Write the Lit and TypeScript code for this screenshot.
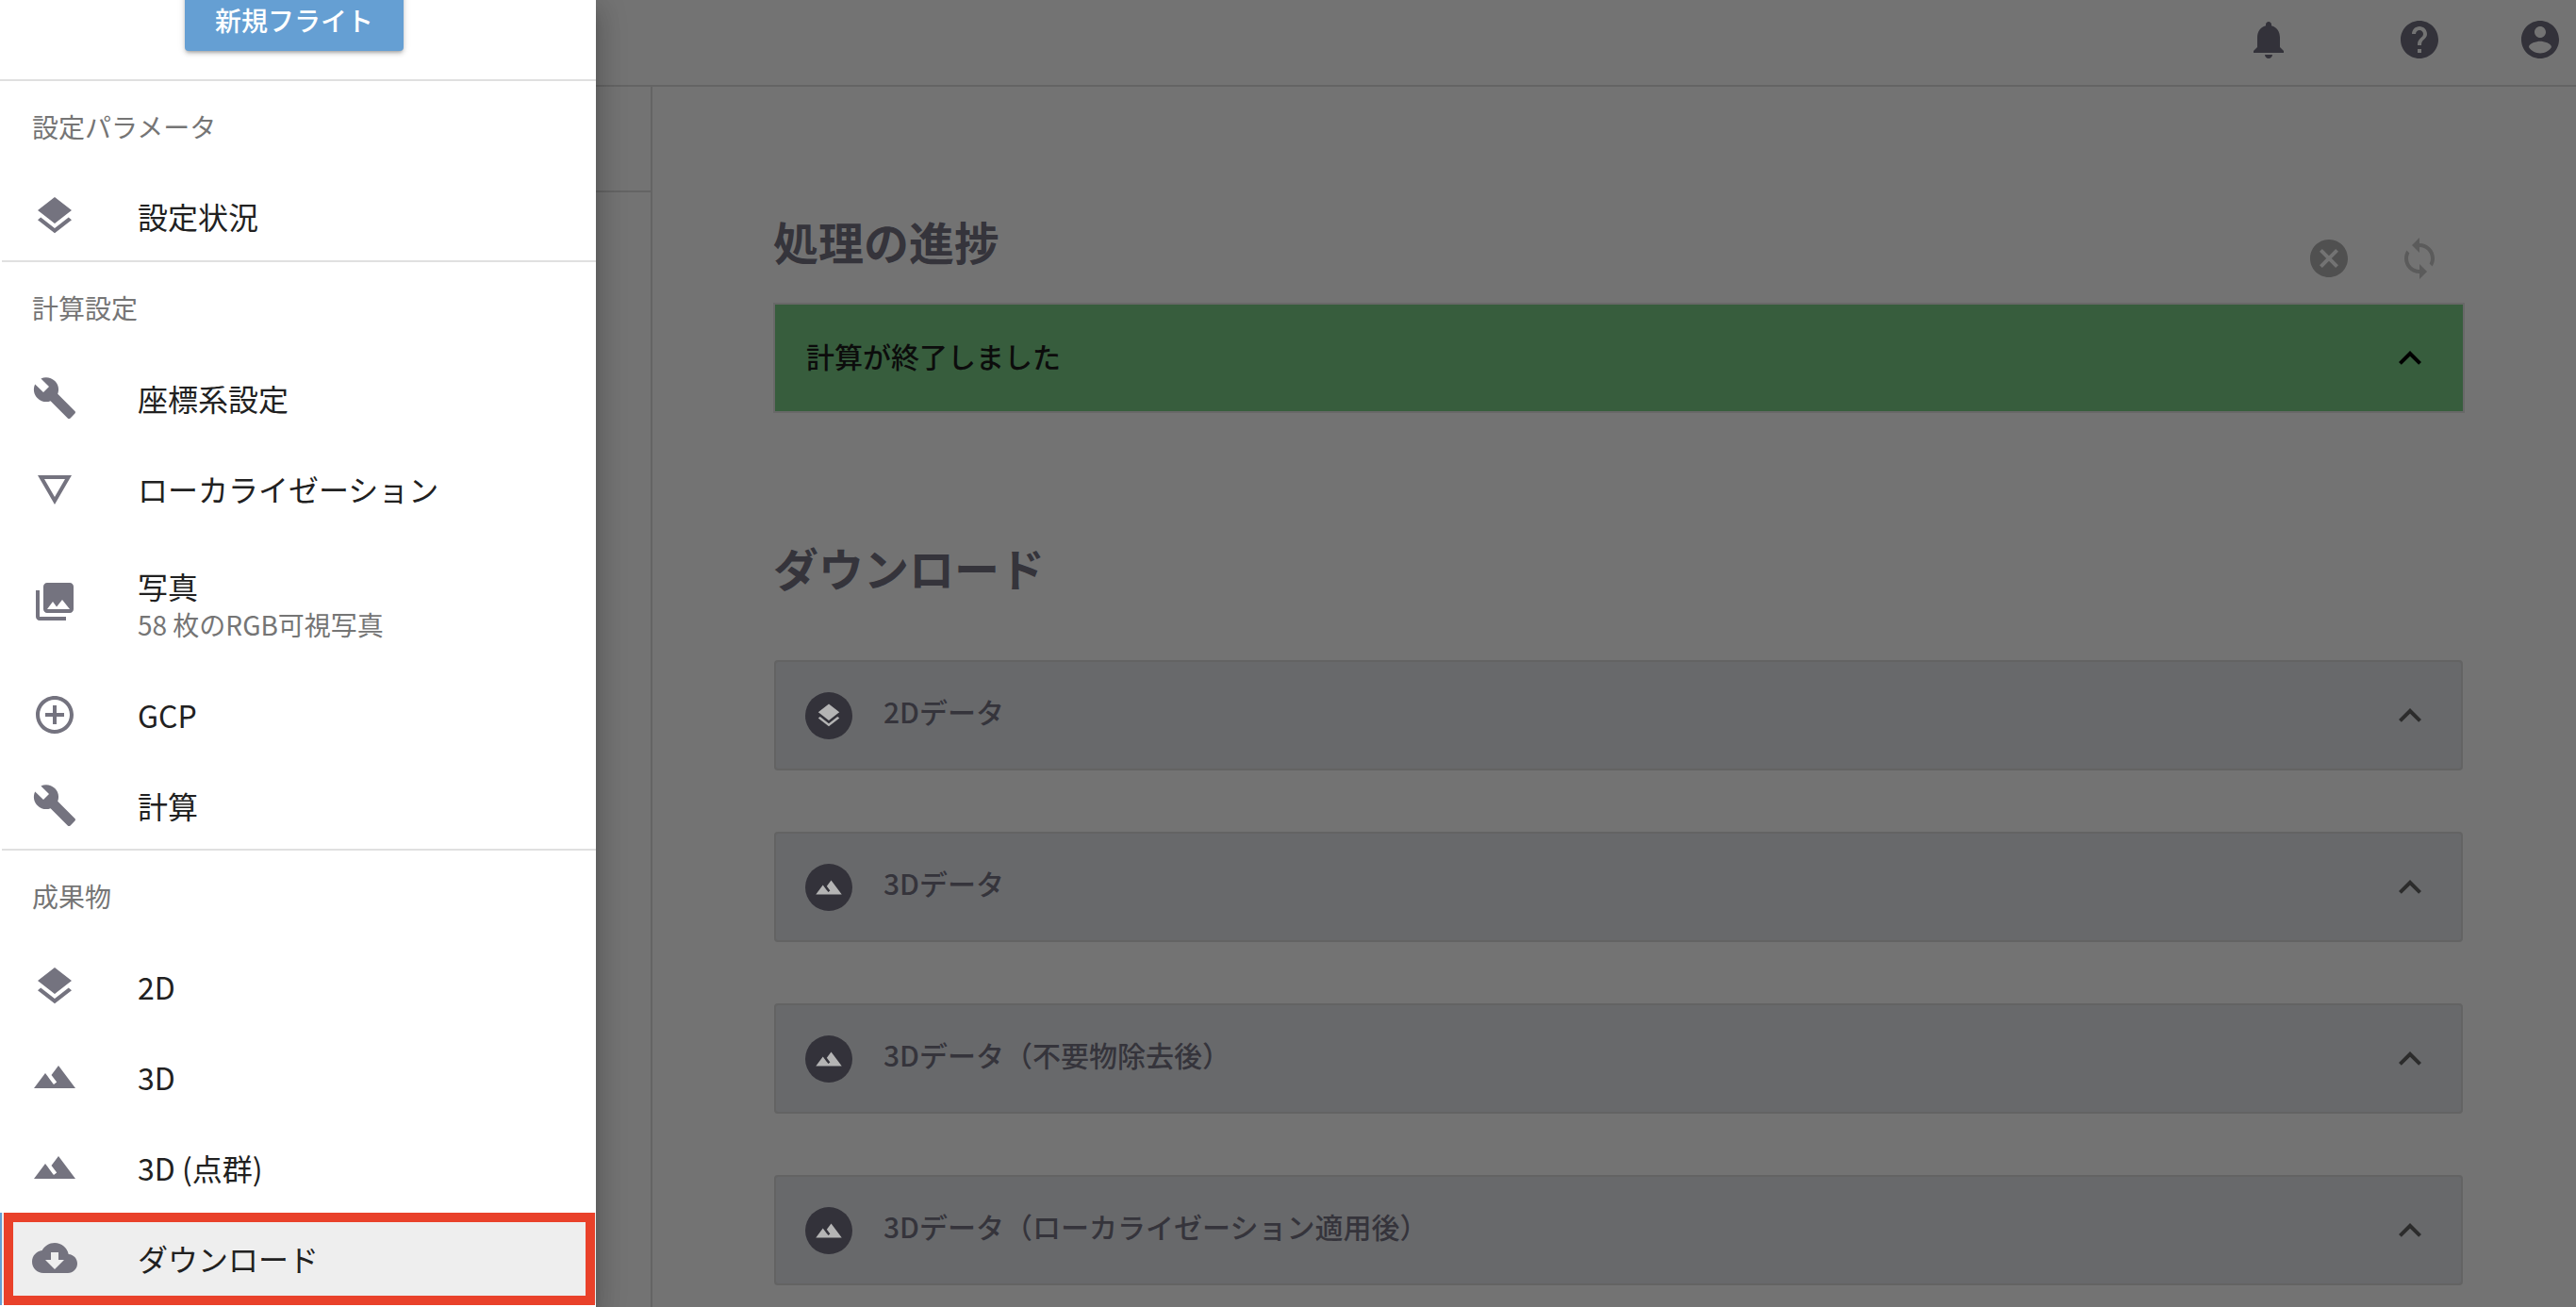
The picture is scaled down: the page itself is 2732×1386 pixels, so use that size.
import { LitElement, html, css, svg } from "lit";
import { customElement } from "lit/decorators.js";

const P = {
  layers: "M11.99 18.54l-7.37-5.73L3 14.07l9 7 9-7-1.63-1.27-7.38 5.74zM12 16l7.36-5.73L21 9l-9-7-9 7 1.63 1.27L12 16z",
  build: "M22.7 19l-9.1-9.1c.9-2.3.4-5-1.5-6.9-2-2-5-2.4-7.4-1.3L9 6 6 9 1.6 4.7C.4 7.1.9 10.1 2.9 12.1c1.9 1.9 4.6 2.4 6.9 1.5l9.1 9.1c.4.4 1 .4 1.4 0l2.3-2.3c.5-.4.5-1.1.1-1.4z",
  tri: "M3 5h18l-9 15.5zM6.5 7l5.5 9.5L17.5 7z",
  photo: "M22 16V4c0-1.1-.9-2-2-2H8c-1.1 0-2 .9-2 2v12c0 1.1.9 2 2 2h12c1.1 0 2-.9 2-2zm-11-4l2.03 2.71L16 11l4 5H8l3-4zM2 6v14c0 1.1.9 2 2 2h14v-2H4V6H2z",
  add: "M13 7h-2v4H7v2h4v4h2v-4h4v-2h-4V7zm-1-5C6.48 2 2 6.48 2 12s4.48 10 10 10 10-4.48 10-10S17.52 2 12 2zm0 18c-4.41 0-8-3.59-8-8s3.59-8 8-8 8 3.59 8 8-3.59 8-8 8z",
  terrain: "M14 6l-3.75 5 2.85 3.8-1.6 1.2C9.81 13.75 7 10 7 10l-6 8h22L14 6z",
  cloud: "M19.35 10.04C18.67 6.59 15.64 4 12 4 9.11 4 6.6 5.64 5.35 8.04 2.34 8.36 0 10.91 0 14c0 3.31 2.69 6 6 6h13c2.76 0 5-2.24 5-5 0-2.64-2.05-4.78-4.65-4.96zM17 13l-5 5-5-5h3V9h4v4h3z",
  bell: "M12 22c1.1 0 2-.9 2-2h-4c0 1.1.89 2 2 2zm6-6v-5c0-3.07-1.64-5.64-4.5-6.32V4c0-.83-.67-1.5-1.5-1.5s-1.5.67-1.5 1.5v.68C7.63 5.36 6 7.92 6 11v5l-2 2v1h16v-1l-2-2z",
  help: "M12 2C6.48 2 2 6.48 2 12s4.48 10 10 10 10-4.48 10-10S17.52 2 12 2zm1 17h-2v-2h2v2zm2.07-7.75l-.9.92C13.45 12.9 13 13.5 13 15h-2v-.5c0-1.1.45-2.1 1.17-2.83l1.24-1.26c.37-.36.59-.86.59-1.41 0-1.1-.9-2-2-2s-2 .9-2 2H8c0-2.21 1.79-4 4-4s4 1.79 4 4c0 .88-.36 1.68-.93 2.25z",
  account: "M12 2C6.48 2 2 6.48 2 12s4.48 10 10 10 10-4.48 10-10S17.52 2 12 2zm0 3c1.66 0 3 1.34 3 3s-1.34 3-3 3-3-1.34-3-3 1.34-3 3-3zm0 14.2c-2.5 0-4.71-1.28-6-3.22.03-1.99 4-3.08 6-3.08 1.99 0 5.97 1.09 6 3.08-1.29 1.94-3.5 3.22-6 3.22z",
  cancel: "M12 2C6.47 2 2 6.47 2 12s4.47 10 10 10 10-4.47 10-10S17.53 2 12 2zm5 13.59L15.59 17 12 13.41 8.41 17 7 15.59 10.59 12 7 8.41 8.41 7 12 10.59 15.59 7 17 8.41 13.41 12 17 15.59z",
  sync: "M12 4V1L8 5l4 4V6c3.31 0 6 2.69 6 6 0 1.01-.25 1.97-.7 2.8l1.46 1.46C19.54 15.03 20 13.57 20 12c0-4.42-3.58-8-8-8zm0 14c-3.31 0-6-2.69-6-6 0-1.01.25-1.97.7-2.8L5.24 7.74C4.46 8.97 4 10.43 4 12c0 4.42 3.58 8 8 8v3l4-4-4-4v3z",
  less: "M12 8l-6 6 1.41 1.41L12 10.83l4.59 4.58L18 14z",
};

const icon = (d: string, cls = "") =>
  html`<svg class="icon ${cls}" viewBox="0 0 24 24" fill-rule="evenodd">${svg`<path d=${d}></path>`}</svg>`;

@customElement("app-root")
export class AppRoot extends LitElement {
  static styles = css`
    :host {
      display: block;
      position: relative;
      width: 2732px;
      height: 1386px;
      overflow: hidden;
      background: #737373;
      font-family: "Noto Sans CJK JP", "Noto Sans", sans-serif;
      color: #35343b;
    }
    .icon { width: 48px; height: 48px; flex: none; display: block; fill: currentColor; }

    .topbar {
      height: 84px;
      padding: 0 14px 6px 0;
      border-bottom: 2px solid #646464;
      display: flex;
      align-items: center;
      justify-content: flex-end;
      gap: 112px;
      color: #33323a;
    }
    .topbar .help { margin-right: -32px; }
    .page { display: flex; height: 1294px; }
    .rail { width: 690px; border-right: 2px solid #646464; flex: none; }
    .rail-head { height: 110px; border-bottom: 2px solid #646464; }

    .content { flex: 1; padding: 129px 120px 0 129px; min-width: 0; }
    .title-row { display: flex; justify-content: space-between; align-items: flex-start; }
    h2 { margin: 0 0 0 -1px; font-size: 48px; line-height: 68px; font-weight: 700; color: #35343b; }
    .actions { display: flex; gap: 48px; margin-top: 29px; padding-right: 22px; }
    .actions .x { color: #505050; }
    .actions .s { color: #5b5b5b; }

    .status {
      margin: 25px 0 0 1px;
      height: 113px;
      background: #375d3d;
      box-shadow: 0 0 0 2px #686868;
      display: flex;
      align-items: center;
      justify-content: space-between;
      padding: 0 32px 0 33px;
      font-size: 30px;
      font-weight: 500;
      color: #0c0c0c;
    }
    .status span { margin-top: -6px; }
    .status .icon { color: #000; }
    .dl { margin-top: 131px; }
    .list { margin-top: 65px; display: flex; flex-direction: column; gap: 65px; }
    .acc {
      height: 117px;
      box-sizing: border-box;
      background: #68696b;
      border: 2px solid #636363;
      border-radius: 4px;
      display: flex;
      align-items: center;
      padding: 0 30px 0 31px;
    }
    .avatar {
      width: 50px;
      height: 50px;
      border-radius: 50%;
      background: #33323a;
      color: #b4b4b4;
      flex: none;
      display: flex;
      align-items: center;
      justify-content: center;
    }
    .avatar .icon { width: 30px; height: 30px; }
    .acc-title { margin: -10px 0 0 33px; flex: 1; font-size: 30px; font-weight: 500; color: #35343b; }
    .acc .chev { color: #2c2c2c; }

    .drawer {
      position: absolute;
      left: 0;
      top: 0;
      width: 632px;
      height: 1386px;
      background: #fff;
      box-shadow: 0 8px 10px -5px rgba(0,0,0,.2), 0 16px 24px 2px rgba(0,0,0,.14), 0 6px 30px 5px rgba(0,0,0,.12);
      overflow: hidden;
    }
    .btn-wrap { display: flex; justify-content: center; height: 84px; }
    .btn {
      margin: -18px 0 0 -8px;
      width: 232px;
      height: 72px;
      background: #659fd3;
      color: #fff;
      border-radius: 4px;
      font-size: 28px;
      font-weight: 500;
      display: flex;
      align-items: center;
      justify-content: center;
      padding-top: 6px;
      box-sizing: border-box;
      box-shadow: 0 3px 3px -2px rgba(0,0,0,.2), 0 3px 4px rgba(0,0,0,.14), 0 1px 8px rgba(0,0,0,.12);
    }
    .div { height: 2px; background: #e0e0e0; }
    .div.m1 { margin-top: -1px; margin-left: 2px; }
    .div.m2 { margin-top: -2px; margin-left: 2px; }
    .label {
      height: 96px;
      box-sizing: border-box;
      padding-left: 34px;
      display: flex;
      align-items: center;
      font-size: 28px;
      color: #757575;
    }
    .label.first { height: 95px; }
    .row {
      height: 96px;
      display: flex;
      align-items: center;
      padding-left: 34px;
      color: #74737f;
    }
    .row.tall { height: 144px; }
    .txt { margin-left: 64px; font-size: 32px; line-height: 44px; color: #212121; padding-bottom: 1px; }
    .row.tall .txt { padding: 1px 0 0; }
    .sub { font-size: 28px; line-height: 34px; margin-top: 2px; color: #757575; }
    .row.active { position: relative; background: #eeeeee; }
    .mark {
      position: absolute;
      left: 4px;
      top: 0;
      width: 627px;
      height: 98px;
      box-sizing: border-box;
      border: 10px solid #e9412a;
    }
    .sliver { position: absolute; left: 0; top: 0; width: 2px; height: 100px; background: #659fd3; }
    .row.active::after { content: ""; position: absolute; left: 0; right: 0; top: 98px; height: 4px; background: #fff; }
  `;

  private row(d: string, t: string) {
    return html`<div class="row">${icon(d)}<div class="txt">${t}</div></div>`;
  }

  private acc(d: string, t: string) {
    return html`<div class="acc">
      <div class="avatar">${icon(d)}</div>
      <div class="acc-title">${t}</div>
      ${icon(P.less, "chev")}
    </div>`;
  }

  render() {
    return html`
      <div class="topbar">
        ${icon(P.bell, "bell")}${icon(P.help, "help")}${icon(P.account)}
      </div>
      <div class="page">
        <div class="rail"><div class="rail-head"></div></div>
        <div class="content">
          <div class="title-row">
            <h2>処理の進捗</h2>
            <div class="actions">${icon(P.cancel, "x")}${icon(P.sync, "s")}</div>
          </div>
          <div class="status"><span>計算が終了しました</span>${icon(P.less)}</div>
          <h2 class="dl">ダウンロード</h2>
          <div class="list">
            ${this.acc(P.layers, "2Dデータ")}
            ${this.acc(P.terrain, "3Dデータ")}
            ${this.acc(P.terrain, "3Dデータ（不要物除去後）")}
            ${this.acc(P.terrain, "3Dデータ（ローカライゼーション適用後）")}
          </div>
        </div>
      </div>
      <aside class="drawer">
        <div class="btn-wrap"><div class="btn">新規フライト</div></div>
        <div class="div"></div>
        <div class="label first">設定パラメータ</div>
        ${this.row(P.layers, "設定状況")}
        <div class="div m1"></div>
        <div class="label">計算設定</div>
        ${this.row(P.build, "座標系設定")}
        ${this.row(P.tri, "ローカライゼーション")}
        <div class="row tall">
          ${icon(P.photo)}
          <div class="txt">写真<div class="sub">58 枚のRGB可視写真</div></div>
        </div>
        ${this.row(P.add, "GCP")}
        ${this.row(P.build, "計算")}
        <div class="div m2"></div>
        <div class="label">成果物</div>
        ${this.row(P.layers, "2D")}
        ${this.row(P.terrain, "3D")}
        ${this.row(P.terrain, "3D (点群)")}
        <div class="row active">
          ${icon(P.cloud)}
          <div class="txt">ダウンロード</div>
          <div class="mark"></div>
          <div class="sliver"></div>
        </div>
      </aside>
    `;
  }
}
